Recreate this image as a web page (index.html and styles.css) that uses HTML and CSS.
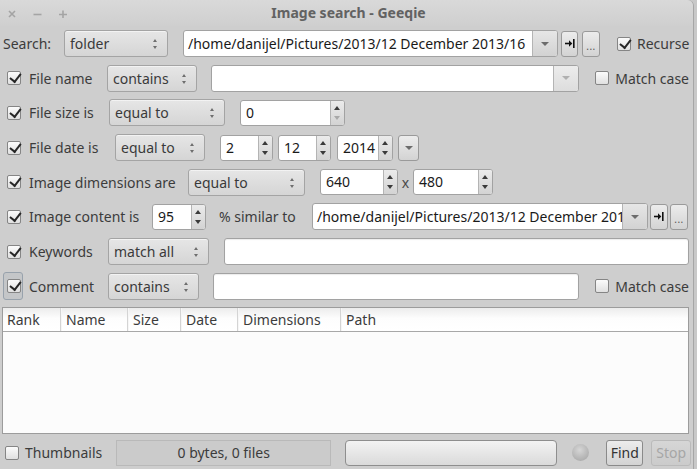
FILE: index.html
```html
<!DOCTYPE html>
<html>
<head>
<meta charset="utf-8">
<title>Image search - Geeqie</title>
<link rel="stylesheet" href="styles.css">
</head>
<body>
<div class="window">
  <div class="titlebar">
    <div class="wm">
      <svg class="wm-close" width="8" height="8" viewBox="0 0 8 8"><path d="M1 1L7 7M7 1L1 7" stroke="#a4a4a4" stroke-width="1.6"/></svg>
      <svg class="wm-min" width="9" height="8" viewBox="0 0 9 8"><path d="M0.5 4.5H8.5" stroke="#a4a4a4" stroke-width="1.6"/></svg>
      <svg class="wm-max" width="8" height="8" viewBox="0 0 8 8"><path d="M0 4.5H8M4 0.5V8" stroke="#a4a4a4" stroke-width="1.6"/></svg>
    </div>
    <div class="title">Image search - Geeqie</div>
  </div>

  <div class="content">
    <div class="row row-search">
      <span class="lbl lbl-search">Search:</span>
      <div class="combo w-folder"><span class="ctext">folder</span><i class="updown"></i></div>
      <div class="cbentry w-path1"><div class="ce-text">/home/danijel/Pictures/2013/12 December 2013/16</div><div class="drop"><i class="tri"></i></div></div>
      <div class="btn ibtn ml3"><svg width="10" height="9" viewBox="0 0 10 9"><path d="M0 4.5H5" stroke="#111" stroke-width="1.6"/><path d="M4 1.2L7.3 4.5L4 7.8Z" fill="#111"/><rect x="8" y="0" width="1.6" height="9" fill="#111"/></svg></div>
      <div class="btn dbtn ml4"><span class="dots">...</span></div>
      <span class="cb checked ml17"></span><span class="lbl ml6">Recurse</span>
    </div>

    <div class="row">
      <span class="cb checked"></span><span class="lbl crit w78">File name</span>
      <div class="combo w90"><span class="ctext">contains</span><i class="updown"></i></div>
      <div class="cbentry grow ml14"><div class="ce-text"></div><div class="drop dim"><i class="tri"></i></div></div>
      <span class="cb ml16"></span><span class="lbl ml6">Match case</span>
    </div>

    <div class="row">
      <span class="cb checked"></span><span class="lbl crit w80">File size is</span>
      <div class="combo w116"><span class="ctext">equal to</span><i class="updown"></i></div>
      <div class="spin w105 ml15"><span class="stext">0</span><span class="sbtn dis-down"></span></div>
    </div>

    <div class="row">
      <span class="cb checked"></span><span class="lbl crit w86">File date is</span>
      <div class="combo w90"><span class="ctext">equal to</span><i class="updown"></i></div>
      <div class="spin w53 ml15"><span class="stext">2</span><span class="sbtn"></span></div>
      <div class="spin w53 ml5"><span class="stext">12</span><span class="sbtn"></span></div>
      <div class="spin w56 ml6"><span class="stext">2014</span><span class="sbtn"></span></div>
      <div class="btn abtn ml5"><i class="tri"></i></div>
    </div>

    <div class="row">
      <span class="cb checked"></span><span class="lbl crit w159">Image dimensions are</span>
      <div class="combo w117"><span class="ctext">equal to</span><i class="updown"></i></div>
      <div class="spin w78 ml15"><span class="stext">640</span><span class="sbtn"></span></div>
      <span class="lbl times">x</span>
      <div class="spin w80"><span class="stext">480</span><span class="sbtn"></span></div>
    </div>

    <div class="row">
      <span class="cb checked"></span><span class="lbl crit w123">Image content is</span>
      <div class="spin w54"><span class="stext">95</span><span class="sbtn"></span></div>
      <span class="lbl similar">% similar to</span>
      <div class="cbentry w336"><div class="ce-text">/home/danijel/Pictures/2013/12 December 2013</div><div class="drop"><i class="tri"></i></div></div>
      <div class="btn ibtn w18 ml2"><svg width="10" height="9" viewBox="0 0 10 9"><path d="M0 4.5H5" stroke="#111" stroke-width="1.6"/><path d="M4 1.2L7.3 4.5L4 7.8Z" fill="#111"/><rect x="8" y="0" width="1.6" height="9" fill="#111"/></svg></div>
      <div class="btn dbtn ml2"><span class="dots">...</span></div>
    </div>

    <div class="row">
      <span class="cb checked"></span><span class="lbl crit w79">Keywords</span>
      <div class="combo w101"><span class="ctext">match all</span><i class="updown"></i></div>
      <div class="entry grow ml15"></div>
    </div>

    <div class="row">
      <span class="focus"><span class="cb checked"></span></span><span class="lbl crit-f w79">Comment</span>
      <div class="combo w91"><span class="ctext">contains</span><i class="updown"></i></div>
      <div class="entry grow ml14"></div>
      <span class="cb ml16"></span><span class="lbl ml6">Match case</span>
    </div>

    <div class="list">
      <div class="lhead">
        <span class="col c-rank">Rank</span>
        <span class="col c-name">Name</span>
        <span class="col c-size">Size</span>
        <span class="col c-date">Date</span>
        <span class="col c-dim">Dimensions</span>
        <span class="col c-path">Path</span>
      </div>
      <div class="lbody"></div>
    </div>

    <div class="row bottom">
      <span class="cb"></span><span class="lbl ml6">Thumbnails</span>
      <div class="status">0 bytes, 0 files</div>
      <div class="progress"></div>
      <span class="led"></span>
      <div class="btn pbtn find">Find</div>
      <div class="btn pbtn stop">Stop</div>
    </div>
  </div>
</div>
</body>
</html>
```

FILE: styles.css
```css
* { box-sizing: border-box; }
html, body { margin: 0; padding: 0; }
body {
  width: 697px;
  height: 469px;
  overflow: hidden;
  background: #c8c8c8;
  font-family: "Noto Sans", "Open Sans", sans-serif;
  font-size: 14px;
  color: #3c3c3c;
}
.window {
  width: 694px;
  height: 469px;
  background: #cecece;
  border-right: 1px solid #a6a6a6;
  border-top-right-radius: 6px;
  display: flex;
  flex-direction: column;
}
.titlebar {
  height: 26px;
  display: grid;
  grid-template-columns: 1fr auto 1fr;
  align-items: center;
  background: linear-gradient(#d9d9d9, #cfcfcf);
  border-top-right-radius: 6px;
}
.wm { display: flex; align-items: center; padding-left: 8px; padding-top: 1px; }
.wm-min { margin-left: 17px; }
.wm-max { margin-left: 17px; }
.title {
  font-weight: bold;
  color: #626262;
  font-size: 14px;
  padding-left: 4px;
  line-height: 20px;
}
.content {
  flex: 1;
  display: flex;
  flex-direction: column;
  gap: 7.7px;
  padding-top: 4px;
}
.row {
  display: flex;
  align-items: center;
  height: 27px;
  flex: none;
  padding-left: 7px;
  padding-right: 4px;
}
.row-search { padding-left: 3px; }
.lbl { white-space: nowrap; flex: none; }
.lbl-search { width: 61px; }
.crit { margin-left: 8px; }
.crit-f { margin-left: 6px; }
.w78 { width: 78px; } .w79 { width: 79px; } .w80 { width: 80px; } .w86 { width: 86px; }
.w123 { width: 123px; } .w159 { width: 159px; }
.ml2 { margin-left: 2px; } .ml3 { margin-left: 3px; } .ml4 { margin-left: 4px; }
.ml5 { margin-left: 5px; } .ml6 { margin-left: 6px; } .ml14 { margin-left: 14px; }
.ml15 { margin-left: 15px; } .ml16 { margin-left: 16px; } .ml17 { margin-left: 17px; }
.grow { flex: 1; }

/* checkbox */
.cb {
  flex: none;
  width: 14px;
  height: 14px;
  border: 1px solid #858585;
  border-radius: 2px;
  background: linear-gradient(#fbfbfb, #e0e0e0);
  position: relative;
}
.cb.checked::after {
  content: "";
  position: absolute;
  left: 3.5px;
  top: -1px;
  width: 4.5px;
  height: 9px;
  border-right: 2.8px solid #262626;
  border-bottom: 2.8px solid #262626;
  transform: rotate(38deg);
}
.focus {
  flex: none;
  width: 20px;
  height: 28px;
  margin-left: -4px;
  border: 1px solid #98a2ac;
  border-radius: 3px;
  background: #c4c6c8;
  display: flex;
  align-items: center;
  padding-left: 3px;
}

/* combo box (button style) */
.combo {
  flex: none;
  height: 27px;
  border: 1px solid #a4a4a4;
  border-radius: 3px;
  background: linear-gradient(#e6e6e6, #d5d5d5);
  display: flex;
  align-items: center;
  padding-left: 5px;
  position: relative;
  box-shadow: inset 0 1px 0 rgba(255,255,255,0.5);
}
.ctext { white-space: nowrap; color: #3a3a3a; }
.w-folder { width: 104px; }
.w90 { width: 90px; } .w91 { width: 91px; } .w101 { width: 101px; }
.w116 { width: 116px; } .w117 { width: 117px; }
.updown {
  position: absolute;
  right: 9px;
  top: 8px;
  width: 5px;
  height: 10px;
}
.updown::before, .updown::after {
  content: "";
  position: absolute;
  left: 0;
  border-left: 2.5px solid transparent;
  border-right: 2.5px solid transparent;
}
.updown::before { top: 0; border-bottom: 3px solid #6e6e6e; }
.updown::after { bottom: 0; border-top: 3px solid #6e6e6e; }

/* entries */
.entry {
  height: 27px;
  background: #fff;
  border: 1px solid #a2a2a2;
  border-radius: 3px;
  box-shadow: inset 0 1px 1px rgba(0,0,0,0.08);
}
.cbentry {
  flex: none;
  height: 27px;
  background: #fff;
  border: 1px solid #a2a2a2;
  border-radius: 3px;
  display: flex;
  overflow: hidden;
}
.cbentry.grow { flex: 1; }
.w-path1 { width: 375px; margin-left: 15px; }
.w336 { width: 336px; }
.ce-text {
  flex: 1;
  min-width: 0;
  white-space: nowrap;
  overflow: hidden;
  color: #1a1a1a;
  padding-left: 4px;
  line-height: 25px;
  font-size: 14px;
}
.drop {
  flex: none;
  width: 25px;
  border-left: 1px solid #b4b4b4;
  background: linear-gradient(#e6e6e6, #d2d2d2);
  display: flex;
  align-items: center;
  justify-content: center;
}
.drop.dim { background: linear-gradient(#ececec, #dddddd); }
.tri {
  width: 0; height: 0;
  border-left: 4px solid transparent;
  border-right: 4px solid transparent;
  border-top: 4px solid #6c6c6c;
}
.drop.dim .tri { border-top-color: #b0b0b0; }

/* spin buttons */
.spin {
  flex: none;
  height: 26px;
  background: #fff;
  border: 1px solid #a2a2a2;
  border-radius: 3px;
  display: flex;
  overflow: hidden;
}
.w53 { width: 53px; } .w54 { width: 54px; } .w56 { width: 56px; }
.w78 { width: 78px; } .w80 { width: 80px; } .w105 { width: 105px; }
.stext { flex: 1; padding-left: 5px; line-height: 24px; color: #1a1a1a; }
.sbtn {
  flex: none;
  width: 14px;
  border-left: 1px solid #b4b4b4;
  background: linear-gradient(#ebebeb, #d3d3d3);
  position: relative;
}
.sbtn::before, .sbtn::after {
  content: "";
  position: absolute;
  left: 3px;
  border-left: 3px solid transparent;
  border-right: 3px solid transparent;
}
.sbtn::before { top: 5px; border-bottom: 4px solid #3a3a3a; }
.sbtn::after { bottom: 5px; border-top: 4px solid #3a3a3a; }
.sbtn.dis-down::after { border-top-color: #a8a8a8; }
.times { width: 15px; text-align: center; color: #4a4a4a; }
.similar { width: 93px; margin-left: 13px; }

/* buttons */
.btn {
  flex: none;
  height: 26px;
  border: 1px solid #9a9a9a;
  border-radius: 3px;
  background: linear-gradient(#ececec, #d3d3d3);
  display: flex;
  align-items: center;
  justify-content: center;
  color: #3a3a3a;
}
.ibtn { width: 17px; }
.ibtn.w18 { width: 18px; }
.dbtn { width: 18px; align-items: flex-end; padding-bottom: 6px; }
.dots { font-size: 10px; line-height: 8px; color: #555; letter-spacing: 0.5px; }
.abtn { width: 21px; }

/* list */
.list {
  flex: none;
  margin: -1px 4px 0 2px;
  height: 127px;
  border: 1px solid #9c9c9c;
  background: #fcfcfc;
  display: flex;
  flex-direction: column;
}
.lhead {
  height: 24px;
  display: flex;
  background: linear-gradient(#ececec 0%, #fdfdfd 45%, #ffffff 100%);
  border-bottom: 1px solid #a8a8a8;
}
.col {
  line-height: 23px;
  padding-left: 5px;
  border-right: 1px solid #d4d4d4;
  box-shadow: 1px 0 0 #f6f6f6;
  white-space: nowrap;
}
.c-rank { width: 58px; padding-left: 4px; }
.c-name { width: 67px; }
.c-size { width: 53px; }
.c-date { width: 57px; }
.c-dim { width: 103px; }
.c-path { flex: 1; border-right: none; box-shadow: none; }
.lbody { flex: 1; }

/* bottom */
.bottom { padding-left: 5px; height: 26px; margin-top: -1.7px; }
.status {
  flex: none;
  width: 215px;
  height: 26px;
  margin-left: 14px;
  border: 1px solid #b9b9b9;
  background: #cbcbcb;
  text-align: center;
  line-height: 24px;
}
.progress {
  flex: none;
  width: 212px;
  height: 26px;
  margin-left: 14px;
  border: 1px solid #8e8e8e;
  border-radius: 4px;
  background: linear-gradient(#f3f3f3, #dadada);
}
.led {
  flex: none;
  width: 17px;
  height: 17px;
  margin-left: 15px;
  border-radius: 50%;
  background: radial-gradient(circle at 45% 35%, #d6d6d6, #aeaeae 75%);
}
.pbtn { height: 26px; }
.find { width: 37px; margin-left: 17px; border-color: #8a8a8a; color: #333; }
.stop { width: 40px; margin-left: 8px; border-color: #bababa; color: #a6a6a6; background: linear-gradient(#d6d6d6, #cbcbcb); }
```
